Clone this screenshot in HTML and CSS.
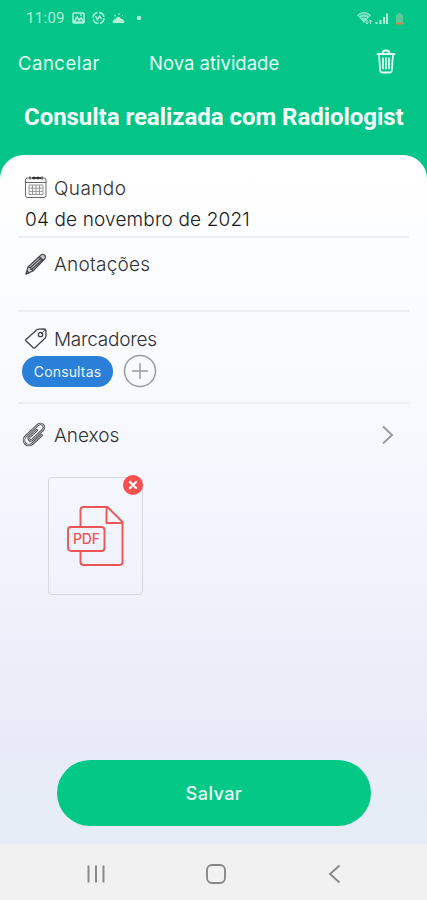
FILE: index.html
```html
<!DOCTYPE html>
<html lang="pt-BR">
<head>
<meta charset="utf-8">
<title>Nova atividade</title>
<link rel="stylesheet" href="styles.css">
</head>
<body>
<div class="app">
  <header class="header">
    <div class="status">
      <span class="clock">11:09</span>
      <svg class="st-left" width="76" height="16" viewBox="0 0 76 16" fill="none" stroke="currentColor" stroke-width="1.5">
        <rect x="3" y="3" width="11" height="10" rx="1"/><path d="M4 12l3-5 2 3 2-2 3 4zM10 5h2"/>
        <circle cx="28.500" cy="8" r="5.500" stroke-dasharray="7 1.6"/><path d="M25.500 6l2 4 2-4 2 3"/>
        <path d="M43 12.500h11c0-3-2-3.500-3-3-1-3-5-3-5 0-2-.5-3 1-3 3zM44 5l2 1M49 3v2M53 5l-1 1" fill="currentColor" stroke-width="1"/>
        <circle cx="69" cy="8" r="2.200" fill="currentColor" stroke="none"/>
      </svg>
      <svg class="st-right" width="50" height="16" viewBox="0 0 50 16" fill="none" stroke="currentColor">
        <path d="M1 5q7-6 14 0l-7 8z" fill="currentColor" stroke="none" opacity=".75"/><path d="M3 6q5-4 10 0M5 8q3-2 6 0" stroke="#03c588" stroke-width=".8"/>
        <path d="M11 10v4M9.500 12.500L11 14l1.500-1.500M14.500 14v-4M13 11.500l1.500-1.500 1.500 1.500"/>
        <path d="M20.500 14v-2M24.500 14v-4" stroke-width="2"/><path d="M28 14V7M31 14V3.500" stroke-width="2"/>
        <path d="M40 14V5l2-1V3h3v1l2 1v9z" fill="#58c79c" stroke="none"/><path d="M40 12.500h8v2h-8z" fill="#c98a50" stroke="none"/>
      </svg>
    </div>
    <div class="toolbar">
      <span class="cancel">Cancelar</span>
      <span class="screen">Nova atividade</span>
      <svg class="trash" width="20" height="26" viewBox="0 0 20 26" fill="none" stroke="currentColor" stroke-width="1.800" stroke-linecap="round" stroke-linejoin="round">
        <path d="M1.500 5h17M6.500 4.500q0-3 3.500-3t3.500 3M3 5.500l1.200 16q.2 2 2.300 2h7q2.100 0 2.300-2L17 5.500"/><path d="M7 9v10.500M10 9v10.500M13 9v10.500" stroke-width="1.700"/>
      </svg>
    </div>
    <h1 class="title"><span>Consulta realizada com Radiologist</span></h1>
  </header>

  <main class="card">
    <section class="row when">
      <div class="label">
        <svg width="24" height="24" viewBox="0 0 24 24" fill="none" stroke="#666" stroke-width="1">
          <rect x="1.500" y="2" width="20.500" height="19.500" rx="2"/><path d="M2 6.500h20"/><path d="M6 .5v3M10 .5v3M14 .5v3M18 .5v3" stroke="#333" stroke-width="1.200"/><path d="M8 2h9" stroke="#222" stroke-width="1.500"/>
          <path d="M5 9h14v9.500H5zM5 12.200h14M5 15.400h14M8.500 9v9.500M12 9v9.500M15.500 9v9.500" stroke="#999"/>
        </svg>
        <span class="t-quando">Quando</span>
      </div>
      <div class="date"><span>04 de novembro de 2021</span></div>
    </section>
    <section class="row notes">
      <div class="label">
        <svg width="24" height="24" viewBox="0 0 24 24" fill="none" stroke="#444" stroke-width="1.100" stroke-linejoin="round">
          <path d="M2 22l2-7L17 3q2-1.500 3.500 0t.5 3.500L9 19z" fill="#c9cacd"/><path d="M4 15l2.500.5.5 2 2 .500v1M6.500 15.500L17.500 5.500M7.500 17.500L19 7M15 5l4 4M2 22l1-3 2 2z"/>
        </svg>
        <span class="t-notes">Anotações</span>
      </div>
    </section>
    <section class="row tags">
      <div class="label">
        <svg width="24" height="24" viewBox="0 0 24 24" fill="none" stroke="#444" stroke-width="1.300" stroke-linejoin="round">
          <path d="M2 12.500L12.500 3q1-.8 2-.8L20 2q1.800 0 1.900 1.800L22 9q0 1.200-.8 2L11 20.700q-1 .8-2-.2l-7-6.500q-.8-.7 0-1.500z"/><circle cx="16.500" cy="7.500" r="2.200"/><path d="M17 7l4.500-4.500" stroke-width=".8"/>
        </svg>
        <span class="t-tags">Marcadores</span>
      </div>
      <div class="chips">
        <span class="chip"><span>Consultas</span></span>
        <svg width="34" height="34" viewBox="0 0 34 34" fill="none" stroke="#999ca0" stroke-width="1.500"><circle cx="17" cy="17" r="15.500"/><path d="M17 9v16M9 17h16"/></svg>
      </div>
    </section>
    <section class="attach">
      <div class="label">
        <svg class="clip" width="26" height="24" viewBox="0 0 26 24" fill="none" stroke-linecap="round" stroke-linejoin="round">
          <g transform="rotate(47 12.500 12)">
            <path d="M16.500 5.500V19a3 3 0 0 1-6 0V6M16.500 13V4.500a4.500 4.500 0 0 0-9 0V19.500a5.500 5.500 0 0 0 5.500 5.500" stroke="none"/>
            <path d="M17.500 7V19.500a5 5 0 0 1-10 0V2.500a3.500 3.500 0 0 1 7 0V17a2 2 0 0 1-4 0V7" stroke="#444" stroke-width="2.500"/>
            <path d="M17.500 7V19.500a5 5 0 0 1-10 0V2.500a3.500 3.500 0 0 1 7 0V17a2 2 0 0 1-4 0V7" stroke="#e9ebf0" stroke-width=".8"/>
          </g>
        </svg>
        <span class="t-attach">Anexos</span>
        <svg class="chevron" width="14" height="20" viewBox="0 0 14 20" fill="none" stroke="#97999c" stroke-width="1.900"><path d="M2 1.500L11 10l-9 8.500"/></svg>
      </div>
      <div class="file">
        <svg width="58" height="62" viewBox="0 0 58 62" fill="none" stroke="#ee5557" stroke-width="1.900" stroke-linejoin="round">
          <path d="M13.500 22V5q0-3 3-3h24l15 15v40q0 3-3 3h-36q-3 0-3-3V46M39.500 2v16h16"/>
          <rect x="1" y="22" width="36.500" height="24" rx="3"/>
          <text x="6" y="39" font-size="14" textLength="27" class="pdf">PDF</text>
        </svg>
        <svg class="remove" width="20" height="20" viewBox="0 0 20 20"><circle cx="10" cy="10" r="10" fill="#fa4f50"/><path d="M6.300 6.300l7.400 7.400M13.700 6.300l-7.400 7.400" stroke="#fff" stroke-width="2.200"/></svg>
      </div>
    </section>
    <button class="save"><span>Salvar</span></button>
  </main>

  <nav class="nav">
    <svg width="20" height="20" viewBox="0 0 20 20" stroke="#858585" stroke-width="1.900"><path d="M2.500 1.500v17M10 1.500v17M17.500 1.500v17"/></svg>
    <svg width="20" height="20" viewBox="0 0 20 20" fill="none" stroke="#858585" stroke-width="1.800"><rect x="1" y="1" width="18" height="18" rx="5"/></svg>
    <svg width="20" height="20" viewBox="0 0 20 20" fill="none" stroke="#858585" stroke-width="1.800"><path d="M14.500 1.500L5 10l9.500 8.500"/></svg>
  </nav>
</div>
</body>
</html>
```
FILE: styles.css
```css
* { box-sizing: border-box; }
body { margin: 0; font-family: Inter, sans-serif; }
svg { display: block; flex: none; }
span { white-space: nowrap; }
.app { width: 427px; height: 900px; display: flex; flex-direction: column; background: #03c588; overflow: hidden; }
.header { height: 155px; flex: none; color: #e6fff4; }
.status { height: 36px; padding: 0 21px 0 26px; display: flex; align-items: center; color: #b5f1d9; }
.clock { width: 44px; font: 400 15px Roboto, sans-serif; letter-spacing: .3px; }
.st-right { margin-left: auto; }
.toolbar { height: 54px; padding: 0 31px 0 18px; display: flex; align-items: center; font-size: 18.5px; }
.cancel { width: 131px; letter-spacing: .5px; }
.screen { letter-spacing: 0; }
.trash { margin-left: auto; margin-top: -2px; }
.title { margin: 0; height: 54px; padding-left: 24px; display: flex; align-items: center; font: 700 24px Roboto, sans-serif; letter-spacing: -.04px; color: #f4fffa; }
.card { height: 689px; flex: none; padding: 0 18px; border-radius: 24px 24px 0 0; background: linear-gradient(#fff 0, #fbfcfe 20%, #f4f7fd 48%, #e8ebf7 85%, #e5edf6 100%); }
.row { border-bottom: 2px solid #eceef1; }
.label { height: 30px; padding-left: 6px; display: flex; align-items: center; gap: 6px; font-size: 19px; font-weight: 300; color: #303136; }
.when { height: 83px; padding-top: 18px; }
.t-quando { letter-spacing: .4px; }
.t-notes { letter-spacing: .25px; }
.t-tags { letter-spacing: -.25px; }
.date { height: 32px; padding-left: 7px; display: flex; align-items: center; font-size: 19px; font-weight: 300; letter-spacing: .15px; color: #18191c; }
.notes { height: 74px; padding-top: 11px; }
.tags { height: 92px; padding-top: 12px; }
.chips { padding-left: 4px; height: 34px; display: flex; align-items: center; gap: 10px; }
.chip { width: 91px; height: 31px; border-radius: 16px; background: #2a7fd9; color: #e9f5ff; display: flex; align-items: center; justify-content: center; font-size: 14px; letter-spacing: .15px; }
.attach { height: 356px; padding-top: 16px; }
.clip { margin-left: -2px; overflow: visible; }
.chevron { margin-left: auto; margin-right: 14px; }
.file { position: relative; margin: 27px 0 0 30px; width: 95px; height: 118px; border: 1.5px solid #d6d8dd; border-radius: 4px; padding: 27px 0 0 18px; }
.pdf { font-family: Inter, sans-serif; font-weight: 500; fill: #ee5557; stroke: none; }
.remove { position: absolute; right: -1px; top: -3px; }
.save { display: flex; align-items: center; justify-content: center; margin-left: 39px; width: 314px; height: 66px; padding: 0; border: 0; border-radius: 33px; background: #03c886; color: #effff8; font: 500 18px Inter, sans-serif; letter-spacing: .4px; }
.nav { height: 56px; background: #f1f1f1; display: flex; align-items: center; padding: 3px 82px 0 86px; justify-content: space-between; }
```
